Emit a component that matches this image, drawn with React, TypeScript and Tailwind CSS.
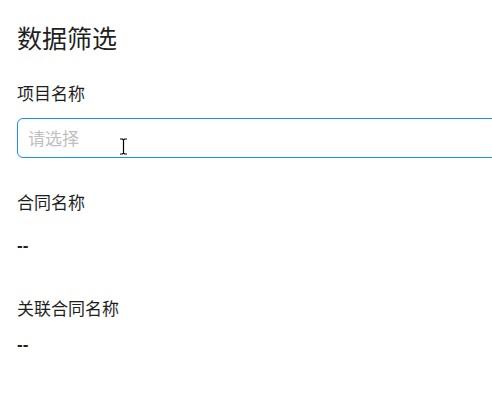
import React from 'react';

const font = { fontFamily: '"Noto Sans CJK SC", "Noto Sans", sans-serif' };
const dashFont = { fontFamily: '"Liberation Sans", Arial, sans-serif' };

// Read-only field: label with value below
const InfoField = ({ label, value, gapClass }: { label: string; value?: string; gapClass: string }) => (
  <div className="flex flex-col">
    <div className="text-[17px] leading-[24px] text-[#1f1f1f]">{label}</div>
    <div className={`${gapClass} text-[17px] leading-[24px] font-bold text-[#1f1f1f]`} style={dashFont}>
      {value || '--'}
    </div>
  </div>
);

export default function App() {
  return (
    <div className="w-[492px] h-[410px] overflow-hidden bg-white" style={font}>
      <div className="flex flex-col pl-[17px] pt-[18px]">
        <h2 className="text-[25px] leading-[38px] text-[#1f1f1f]">数据筛选</h2>

        <div className="mt-[25px] text-[17px] leading-[24px] text-[#1f1f1f]">项目名称</div>
        <div className="relative mt-[13px] flex items-center w-[520px] h-[40px] rounded-[6px] border border-[#1890ff] px-[10px]">
          <span className="text-[17px] leading-[24px] text-[#bfbfbf]">请选择</span>
          {/* mouse I-beam cursor */}
          <svg className="absolute left-[101px] top-[19px]" width="9" height="17" viewBox="0 0 9 17">
            <path d="M1 1h2.5L4.5 2 5.5 1H8M4.5 2v13M1 16h2.5l1-1 1 1H8" fill="none" stroke="#000" strokeWidth="1.2" />
          </svg>
        </div>

        <div className="mt-[32px]">
          <InfoField label="合同名称" gapClass="mt-[20px]" />
        </div>
        <div className="mt-[38px]">
          <InfoField label="关联合同名称" gapClass="mt-[13px]" />
        </div>
      </div>
    </div>
  );
}
